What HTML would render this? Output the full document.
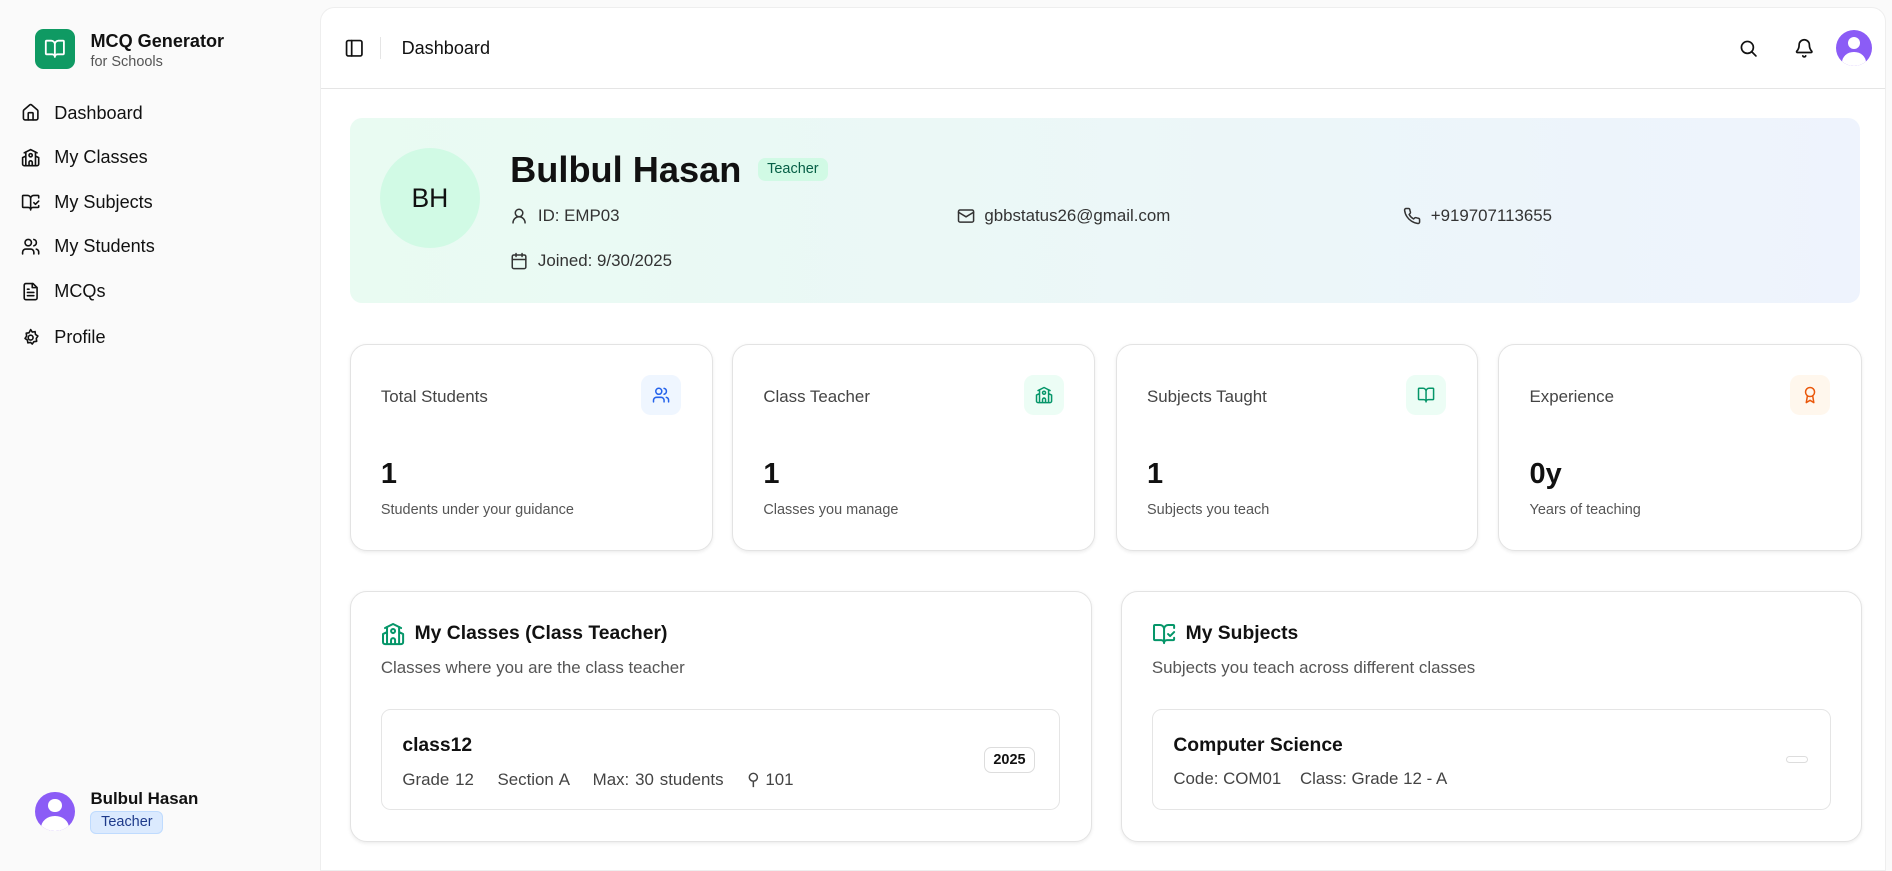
<!DOCTYPE html>
<html><head><meta charset="utf-8"><style>
html{zoom:1.2066}
*{box-sizing:border-box;margin:0;padding:0}
body{width:1568px;height:716px;background:#fafafa;font-family:"Liberation Sans",sans-serif;color:#111;position:relative;overflow:hidden}
svg{fill:none;stroke:currentColor;stroke-width:2;stroke-linecap:round;stroke-linejoin:round}
.side{position:absolute;left:0;top:0;width:265px;height:716px}
.logo{position:absolute;left:29px;top:24px;width:33px;height:33px;border-radius:7px;background:#0f9a63;color:#fff;display:flex;align-items:center;justify-content:center}
.nav{position:absolute;left:17px;font-size:15px;display:flex;align-items:center;gap:12px}
.main{position:absolute;left:265px;top:6px;width:1298px;height:716px;background:#fff;border-radius:12px 12px 0 0;border:1px solid #eee}
.top{height:67px;border-bottom:1px solid #e5e5e5;position:relative}
.hero{position:absolute;left:24px;top:91px;width:1252px;height:153px;border-radius:10px;background:linear-gradient(90deg,#e9fbf2,#eef3fd)}
.card{position:absolute;background:#fff;border:1px solid #e3e3e3;border-radius:14px;box-shadow:0 1px 3px rgba(0,0,0,.08)}
.ib{position:absolute;width:33px;height:33px;border-radius:8px;display:flex;align-items:center;justify-content:center}
.muted{color:#555}
</style></head><body>
<div class="side">
 <div class="logo"><svg width="18" height="18" viewBox="0 0 24 24"><path d="M12 7v14M3 18a1 1 0 0 1-1-1V4a1 1 0 0 1 1-1h5a4 4 0 0 1 4 4 4 4 0 0 1 4-4h5a1 1 0 0 1 1 1v13a1 1 0 0 1-1 1h-6a3 3 0 0 0-3 3 3 3 0 0 0-3-3z"/></svg></div>
 <div style="position:absolute;left:75px;top:26px;font-size:15px;font-weight:bold">MCQ Generator</div>
 <div style="position:absolute;left:75px;top:45px;font-size:12px;color:#555">for Schools</div>
 <div class="nav" style="top:85px"><svg width="16" height="16" viewBox="0 0 24 24"><path d="M15 21v-8a1 1 0 0 0-1-1h-4a1 1 0 0 0-1 1v8"/><path d="M3 10a2 2 0 0 1 .7-1.5l7-6a2 2 0 0 1 2.6 0l7 6A2 2 0 0 1 21 10v9a2 2 0 0 1-2 2H5a2 2 0 0 1-2-2z"/></svg>Dashboard</div>
 <div class="nav" style="top:122px"><svg width="16" height="16" viewBox="0 0 24 24"><path d="M14 22v-4a2 2 0 1 0-4 0v4M18 10l4 2v8a2 2 0 0 1-2 2H4a2 2 0 0 1-2-2v-8l4-2M18 5v17M6 5v17"/><path d="m4 6 8-4 8 4"/><circle cx="12" cy="9" r="2"/></svg>My Classes</div>
 <div class="nav" style="top:159px"><svg width="16" height="16" viewBox="0 0 24 24"><path d="M12 21V7M16 12l2 2 4-4M22 6V4a1 1 0 0 0-1-1h-5a4 4 0 0 0-4 4 4 4 0 0 0-4-4H3a1 1 0 0 0-1 1v13a1 1 0 0 0 1 1h6a3 3 0 0 1 3 3 3 3 0 0 1 3-3h6a1 1 0 0 0 1-1v-1.3"/></svg>My Subjects</div>
 <div class="nav" style="top:196px"><svg width="16" height="16" viewBox="0 0 24 24"><path d="M16 21v-2a4 4 0 0 0-4-4H6a4 4 0 0 0-4 4v2"/><circle cx="9" cy="7" r="4"/><path d="M22 21v-2a4 4 0 0 0-3-3.9M16 3.1a4 4 0 0 1 0 7.8"/></svg>My Students</div>
 <div class="nav" style="top:233px"><svg width="16" height="16" viewBox="0 0 24 24"><path d="M15 2H6a2 2 0 0 0-2 2v16a2 2 0 0 0 2 2h12a2 2 0 0 0 2-2V7z"/><path d="M14 2v5h5M10 9H8M16 13H8M16 17H8"/></svg>MCQs</div>
 <div class="nav" style="top:271px"><svg width="16" height="16" viewBox="0 0 24 24"><circle cx="12" cy="12" r="3"/><path d="M12 2l2 3 3.5-.5.5 3.5 3 2-2 3 .5 3.5-3.5.5-2 3-2-2-3.5.5-.5-3.5-3-2 2-3-.5-3.5 3.5-.5z"/></svg>Profile</div>
 <div style="position:absolute;left:29px;top:656px;width:33px;height:33px;border-radius:50%;background:#8b5cf6;overflow:hidden"><div style="position:absolute;left:11px;top:6px;width:11px;height:11px;border-radius:50%;background:#fff"></div><div style="position:absolute;left:5px;top:20px;width:23px;height:20px;border-radius:50%;background:#fff"></div></div>
 <div style="position:absolute;left:75px;top:654px;font-size:14px;font-weight:bold">Bulbul Hasan</div>
 <div style="position:absolute;left:75px;top:672px;font-size:12px;padding:2px 8px;border-radius:5px;background:#dbeafe;border:1px solid #bfdbfe;color:#1e3a8a">Teacher</div>
</div>
<div class="main">
 <div class="top">
  <svg style="position:absolute;left:19px;top:25px" width="17" height="17" viewBox="0 0 24 24"><rect x="3" y="3" width="18" height="18" rx="2"/><path d="M9 3v18"/></svg>
  <div style="position:absolute;left:49px;top:24px;width:1px;height:18px;background:#e5e5e5"></div>
  <div style="position:absolute;left:67px;top:25px;font-size:15px">Dashboard</div>
  <svg style="position:absolute;left:1175px;top:25px" width="17" height="17" viewBox="0 0 24 24"><circle cx="11" cy="11" r="7"/><path d="m21 21-4.3-4.3"/></svg>
  <svg style="position:absolute;left:1221px;top:25px" width="17" height="17" viewBox="0 0 24 24"><path d="M10.3 21a1.9 1.9 0 0 0 3.4 0M3.3 15.3A1 1 0 0 0 4 17h16a1 1 0 0 0 .7-1.7C19.4 14 18 12.5 18 8A6 6 0 0 0 6 8c0 4.5-1.4 6-2.7 7.3"/></svg>
  <div style="position:absolute;left:1256px;top:18px;width:30px;height:30px;border-radius:50%;background:#8b5cf6;overflow:hidden"><div style="position:absolute;left:10px;top:6px;width:10px;height:10px;border-radius:50%;background:#fff"></div><div style="position:absolute;left:5px;top:18px;width:20px;height:18px;border-radius:50%;background:#fff"></div></div>
 </div>
 <div class="hero">
  <div style="position:absolute;left:25px;top:25px;width:83px;height:83px;border-radius:50%;background:#d1fae5;display:flex;align-items:center;justify-content:center;font-size:22px">BH</div>
  <div style="position:absolute;left:133px;top:26px;font-size:30px;font-weight:bold">Bulbul Hasan</div>
  <div style="position:absolute;left:338px;top:33px;font-size:12px;padding:3px 8px;border-radius:6px;background:#d1fae5;color:#065f46">Teacher</div>
  <div class="muted" style="position:absolute;left:133px;top:73px;font-size:14px;display:flex;gap:8px;align-items:center;color:#333"><svg width="15" height="15" viewBox="0 0 24 24"><circle cx="12" cy="8" r="5"/><path d="M20 21a8 8 0 0 0-16 0"/></svg>ID: EMP03</div>
  <div style="position:absolute;left:503px;top:73px;font-size:14px;display:flex;gap:8px;align-items:center;color:#333"><svg width="15" height="15" viewBox="0 0 24 24"><rect x="2" y="4" width="20" height="16" rx="2"/><path d="m22 7-10 6L2 7"/></svg>gbbstatus26@gmail.com</div>
  <div style="position:absolute;left:873px;top:73px;font-size:14px;display:flex;gap:8px;align-items:center;color:#333"><svg width="15" height="15" viewBox="0 0 24 24"><path d="M22 16.9v3a2 2 0 0 1-2.2 2 19.8 19.8 0 0 1-8.6-3.1 19.5 19.5 0 0 1-6-6A19.8 19.8 0 0 1 2.1 4.2 2 2 0 0 1 4.1 2h3a2 2 0 0 1 2 1.7c.1 1 .4 1.9.7 2.8a2 2 0 0 1-.5 2.1L8.1 9.9a16 16 0 0 0 6 6l1.3-1.3a2 2 0 0 1 2.1-.4c.9.3 1.8.6 2.8.7a2 2 0 0 1 1.7 2z"/></svg>+919707113655</div>
  <div style="position:absolute;left:133px;top:110px;font-size:14px;display:flex;gap:8px;align-items:center;color:#333"><svg width="15" height="15" viewBox="0 0 24 24"><rect x="3" y="4" width="18" height="18" rx="2"/><path d="M16 2v4M8 2v4M3 10h18"/></svg>Joined: 9/30/2025</div>
 </div>
 <!-- stat cards -->
 <div class="card" style="left:24px;top:278px;width:301px;height:172px">
  <div style="position:absolute;left:25px;top:35px;font-size:14px;color:#444">Total Students</div>
  <div class="ib" style="left:241px;top:25px;background:#eff6ff;color:#2563eb"><svg width="15" height="15" viewBox="0 0 24 24"><path d="M16 21v-2a4 4 0 0 0-4-4H6a4 4 0 0 0-4 4v2"/><circle cx="9" cy="7" r="4"/><path d="M22 21v-2a4 4 0 0 0-3-3.9M16 3.1a4 4 0 0 1 0 7.8"/></svg></div>
  <div style="position:absolute;left:25px;top:94px;font-size:24px;font-weight:bold">1</div>
  <div style="position:absolute;left:25px;top:130px;font-size:12px;color:#555">Students under your guidance</div>
 </div>
 <div class="card" style="left:341px;top:278px;width:301px;height:172px">
  <div style="position:absolute;left:25px;top:35px;font-size:14px;color:#444">Class Teacher</div>
  <div class="ib" style="left:241px;top:25px;background:#ecfdf5;color:#059669"><svg width="15" height="15" viewBox="0 0 24 24"><path d="M14 22v-4a2 2 0 1 0-4 0v4M18 10l4 2v8a2 2 0 0 1-2 2H4a2 2 0 0 1-2-2v-8l4-2M18 5v17M6 5v17"/><path d="m4 6 8-4 8 4"/><circle cx="12" cy="9" r="2"/></svg></div>
  <div style="position:absolute;left:25px;top:94px;font-size:24px;font-weight:bold">1</div>
  <div style="position:absolute;left:25px;top:130px;font-size:12px;color:#555">Classes you manage</div>
 </div>
 <div class="card" style="left:659px;top:278px;width:300px;height:172px">
  <div style="position:absolute;left:25px;top:35px;font-size:14px;color:#444">Subjects Taught</div>
  <div class="ib" style="left:240px;top:25px;background:#ecfdf5;color:#059669"><svg width="15" height="15" viewBox="0 0 24 24"><path d="M12 7v14M3 18a1 1 0 0 1-1-1V4a1 1 0 0 1 1-1h5a4 4 0 0 1 4 4 4 4 0 0 1 4-4h5a1 1 0 0 1 1 1v13a1 1 0 0 1-1 1h-6a3 3 0 0 0-3 3 3 3 0 0 0-3-3z"/></svg></div>
  <div style="position:absolute;left:25px;top:94px;font-size:24px;font-weight:bold">1</div>
  <div style="position:absolute;left:25px;top:130px;font-size:12px;color:#555">Subjects you teach</div>
 </div>
 <div class="card" style="left:976px;top:278px;width:301px;height:172px">
  <div style="position:absolute;left:25px;top:35px;font-size:14px;color:#444">Experience</div>
  <div class="ib" style="left:241px;top:25px;background:#fff7ed;color:#ea580c"><svg width="15" height="15" viewBox="0 0 24 24"><circle cx="12" cy="8" r="6"/><path d="M15.5 12.9 17 22l-5-3-5 3 1.5-9.1"/></svg></div>
  <div style="position:absolute;left:25px;top:94px;font-size:24px;font-weight:bold">0y</div>
  <div style="position:absolute;left:25px;top:130px;font-size:12px;color:#555">Years of teaching</div>
 </div>
 <!-- bottom -->
 <div class="card" style="left:24px;top:483px;width:615px;height:208px">
  <div style="position:absolute;left:25px;top:25px;font-size:16px;font-weight:bold;display:flex;gap:8px;align-items:center"><svg style="color:#059669" width="20" height="20" viewBox="0 0 24 24"><path d="M14 22v-4a2 2 0 1 0-4 0v4M18 10l4 2v8a2 2 0 0 1-2 2H4a2 2 0 0 1-2-2v-8l4-2M18 5v17M6 5v17"/><path d="m4 6 8-4 8 4"/><circle cx="12" cy="9" r="2"/></svg>My Classes (Class Teacher)</div>
  <div style="position:absolute;left:25px;top:55px;font-size:14px;color:#555">Classes where you are the class teacher</div>
  <div style="position:absolute;left:25px;top:97px;width:563px;height:84px;border:1px solid #e5e5e5;border-radius:8px">
   <div style="position:absolute;left:17px;top:21px;font-size:16px;font-weight:bold">class12</div>
   <div style="position:absolute;left:17px;top:49px;font-size:14px;color:#444;word-spacing:1px">Grade 12 &nbsp;&nbsp; Section A &nbsp;&nbsp; Max: 30 students &nbsp;&nbsp; ⚲ 101</div>
   <div style="position:absolute;left:499px;top:31px;font-size:12px;font-weight:bold;padding:3px 7px;border:1px solid #ddd;border-radius:6px">2025</div>
  </div>
 </div>
 <div class="card" style="left:663px;top:483px;width:614px;height:208px">
  <div style="position:absolute;left:25px;top:25px;font-size:16px;font-weight:bold;display:flex;gap:8px;align-items:center"><svg style="color:#059669" width="20" height="20" viewBox="0 0 24 24"><path d="M12 21V7M16 12l2 2 4-4M22 6V4a1 1 0 0 0-1-1h-5a4 4 0 0 0-4 4 4 4 0 0 0-4-4H3a1 1 0 0 0-1 1v13a1 1 0 0 0 1 1h6a3 3 0 0 1 3 3 3 3 0 0 1 3-3h6a1 1 0 0 0 1-1v-1.3"/></svg>My Subjects</div>
  <div style="position:absolute;left:25px;top:55px;font-size:14px;color:#555">Subjects you teach across different classes</div>
  <div style="position:absolute;left:25px;top:97px;width:563px;height:84px;border:1px solid #e5e5e5;border-radius:8px">
   <div style="position:absolute;left:17px;top:21px;font-size:16px;font-weight:bold">Computer Science</div>
   <div style="position:absolute;left:17px;top:49px;font-size:14px;color:#444">Code: COM01 &nbsp;&nbsp; Class: Grade 12 - A</div>
   <div style="position:absolute;left:525px;top:38px;width:18px;height:6px;border:1px solid #ddd;border-radius:4px"></div>
  </div>
 </div>
</div>
</body></html>
